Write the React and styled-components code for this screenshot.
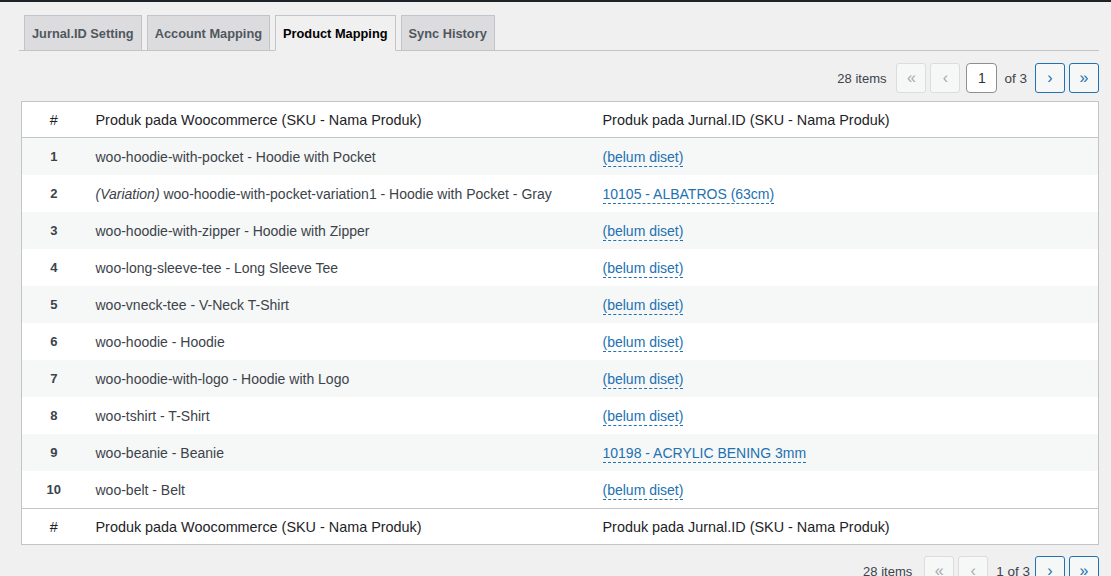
import React from "react";
import styled, { createGlobalStyle } from "styled-components";

const GlobalStyle = createGlobalStyle`
  html, body {
    margin: 0;
    padding: 0;
    background: #f0f0f1;
    font-family: "Liberation Sans", Arial, sans-serif;
    color: #3c434a;
    font-size: 14px;
  }
`;

const AdminEdge = styled.div`
  height: 2px;
  background: #1d2327;
`;

const Wrap = styled.div`
  padding: 13px 12px 0 21px;
`;

const TabBar = styled.nav`
  display: flex;
  gap: 5px;
  padding-left: 5px;
  margin-left: -2px;
  border-bottom: 1px solid #c3c4c7;
`;

const Tab = styled.a`
  display: block;
  padding: 0 7px;
  height: 34px;
  line-height: 35px;
  margin-bottom: -1px;
  font-size: 12.8px;
  font-weight: 700;
  border: 1px solid #c3c4c7;
  background: ${(p) => (p.active ? "#f0f0f1" : "#dcdcde")};
  border-bottom-color: ${(p) => (p.active ? "#f0f0f1" : "#c3c4c7")};
  color: ${(p) => (p.active ? "#000" : "#50575e")};
  text-decoration: none;
`;

const Nav = styled.div`
  display: flex;
  justify-content: flex-end;
  align-items: center;
  height: 30px;
  margin: ${(p) => (p.bottom ? "11px 0 0" : "12px 0 8px")};
  gap: 4px;
`;

const Count = styled.span`
  margin-right: ${(p) => (p.bottom ? "8px" : "6px")};
  font-size: 13px;
  color: #3c434a;
`;

const PageBtn = styled.span`
  box-sizing: border-box;
  width: 30px;
  height: 30px;
  display: flex;
  align-items: center;
  justify-content: center;
  border: 1px solid ${(p) => (p.disabled ? "#dcdcde" : "#2271b1")};
  border-radius: 3px;
  background: #f6f7f7;
  color: ${(p) => (p.disabled ? "#a7aaad" : "#2271b1")};
  font-size: 16px;
  line-height: 1;
`;

const PageInput = styled.span`
  box-sizing: border-box;
  width: 31px;
  height: 30px;
  display: flex;
  align-items: center;
  justify-content: center;
  border: 1px solid #8c8f94;
  border-radius: 4px;
  background: #fff;
  color: #2c3338;
  font-size: 14px;
  margin-left: 2px;
`;

const OfText = styled.span`
  margin: ${(p) => (p.bottom ? "0 1px 0 4px" : "0 4px 0 3px")};
  font-size: 13.5px;
  color: #3c434a;
`;

const Table = styled.table`
  width: 100%;
  border-collapse: collapse;
  table-layout: fixed;
  background: #fff;
  border: 1px solid #c3c4c7;
`;

const HeadCell = styled.th`
  height: 35px;
  padding: 0 10px;
  text-align: ${(p) => (p.center ? "center" : "left")};
  font-weight: 400;
  font-size: 14.4px;
  color: #1d2327;
  ${(p) => (p.top ? "border-bottom" : "border-top")}: 1px solid #c3c4c7;
`;

const Row = styled.tr`
  background: ${(p) => (p.odd ? "#f6f7f7" : "#fff")};
`;

const Cell = styled.td`
  height: 37px;
  padding: 0 10px;
  vertical-align: middle;
  text-align: ${(p) => (p.center ? "center" : "left")};
  font-weight: ${(p) => (p.center ? 700 : 400)};
  font-size: ${(p) => (p.center ? "13px" : "14px")};
  color: #3c434a;
`;

const Mapped = styled.a`
  color: #2271b1;
  text-decoration: none;
  border-bottom: 1px dashed #2271b1;
  padding-bottom: 1px;
`;

const rows = [
  ["woo-hoodie-with-pocket - Hoodie with Pocket", null],
  ["woo-hoodie-with-pocket-variation1 - Hoodie with Pocket - Gray", "10105 - ALBATROS (63cm)", true],
  ["woo-hoodie-with-zipper - Hoodie with Zipper", null],
  ["woo-long-sleeve-tee - Long Sleeve Tee", null],
  ["woo-vneck-tee - V-Neck T-Shirt", null],
  ["woo-hoodie - Hoodie", null],
  ["woo-hoodie-with-logo - Hoodie with Logo", null],
  ["woo-tshirt - T-Shirt", null],
  ["woo-beanie - Beanie", "10198 - ACRYLIC BENING 3mm"],
  ["woo-belt - Belt", null],
];

function Pagination({ bottom }) {
  return (
    <Nav bottom={bottom}>
      <Count bottom={bottom}>28 items</Count>
      <PageBtn disabled>«</PageBtn>
      <PageBtn disabled>‹</PageBtn>
      {bottom ? (
        <OfText bottom>1 of 3</OfText>
      ) : (
        <>
          <PageInput>1</PageInput>
          <OfText>of 3</OfText>
        </>
      )}
      <PageBtn>›</PageBtn>
      <PageBtn>»</PageBtn>
    </Nav>
  );
}

function HeaderRow({ top }) {
  return (
    <tr>
      <HeadCell top={top} center>#</HeadCell>
      <HeadCell top={top}>Produk pada Woocommerce (SKU - Nama Produk)</HeadCell>
      <HeadCell top={top}>Produk pada Jurnal.ID (SKU - Nama Produk)</HeadCell>
    </tr>
  );
}

export default function App() {
  return (
    <>
      <GlobalStyle />
      <AdminEdge />
      <Wrap>
        <TabBar>
          <Tab>Jurnal.ID Setting</Tab>
          <Tab>Account Mapping</Tab>
          <Tab active>Product Mapping</Tab>
          <Tab>Sync History</Tab>
        </TabBar>
        <Pagination />
        <Table>
          <colgroup>
            <col style={{ width: 64 }} />
            <col style={{ width: 507 }} />
            <col />
          </colgroup>
          <thead>
            <HeaderRow top />
          </thead>
          <tbody>
            {rows.map(([woo, jurnal, variation], i) => (
              <Row key={i} odd={i % 2 === 0}>
                <Cell center>{i + 1}</Cell>
                <Cell>
                  {variation && <i>(Variation) </i>}
                  {woo}
                </Cell>
                <Cell>
                  <Mapped>{jurnal || "(belum diset)"}</Mapped>
                </Cell>
              </Row>
            ))}
          </tbody>
          <tfoot>
            <HeaderRow />
          </tfoot>
        </Table>
        <Pagination bottom />
      </Wrap>
    </>
  );
}
